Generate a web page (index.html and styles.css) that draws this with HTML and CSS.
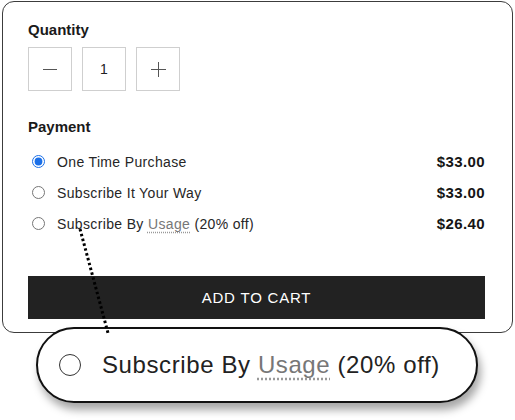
FILE: index.html
```html
<!DOCTYPE html>
<html>
<head>
<meta charset="utf-8">
<link rel="stylesheet" href="styles.css">
</head>
<body>
<div class="page">
  <div class="card">
    <div class="heading">Quantity</div>
    <div class="qty">
      <div class="qty-box">
        <svg width="14" height="14" viewBox="0 0 14 14"><line x1="0" y1="7.5" x2="14" y2="7.5" stroke="#555" stroke-width="1"/></svg>
      </div>
      <div class="qty-box qty-value">1</div>
      <div class="qty-box">
        <svg width="15" height="15" viewBox="0 0 15 15"><line x1="0" y1="7.5" x2="15" y2="7.5" stroke="#555" stroke-width="1"/><line x1="7.5" y1="0" x2="7.5" y2="15" stroke="#555" stroke-width="1"/></svg>
      </div>
    </div>
    <div class="heading payment">Payment</div>
    <div class="options">
      <label class="option">
        <input type="radio" name="pay" class="radio" checked>
        <span class="label">One Time Purchase</span>
        <span class="price">$33.00</span>
      </label>
      <label class="option">
        <input type="radio" name="pay" class="radio">
        <span class="label">Subscribe It Your Way</span>
        <span class="price">$33.00</span>
      </label>
      <label class="option">
        <input type="radio" name="pay" class="radio">
        <span class="label">Subscribe By <span class="usage">Usage</span> (20% off)</span>
        <span class="price">$26.40</span>
      </label>
    </div>
    <button class="cart">ADD TO CART</button>
  </div>

  <div class="zoom">
    <span class="zoom-radio"></span>
    <span class="zoom-text">Subscribe By <span class="usage">Usage</span> (20% off)</span>
  </div>

  <svg class="pointer" width="515" height="420" viewBox="0 0 515 420">
    <line x1="80" y1="229" x2="108" y2="333" stroke="#000" stroke-width="3" stroke-dasharray="2.5 2.5"/>
  </svg>
</div>
</body>
</html>
```
FILE: styles.css
```css
* { box-sizing: border-box; }

html, body {
  margin: 0;
  background: #fff;
}

body {
  font-family: "Liberation Sans", Arial, sans-serif;
  color: #222;
  width: 515px;
  height: 420px;
  overflow: hidden;
}

.page {
  position: relative;
  padding: 1px 0 0 2px;
  height: 420px;
}

.card {
  width: 511px;
  border: 1px solid #3c3c3c;
  border-radius: 12px;
  padding: 19px 27px 13px 25px;
  background: #fff;
}

.heading {
  font-weight: bold;
  font-size: 15px;
  line-height: 18px;
  color: #1a1a1a;
}

.qty {
  display: flex;
  gap: 10px;
  margin-top: 8px;
}

.qty-box {
  width: 44px;
  height: 44px;
  border: 1px solid #cfcfcf;
  display: flex;
  align-items: center;
  justify-content: center;
}

.qty-box svg { display: block; }

.qty-value {
  font-size: 14px;
  color: #222;
}

.payment {
  margin-top: 27px;
}

.options {
  margin-top: 10px;
  display: flex;
  flex-direction: column;
}

.option {
  display: flex;
  align-items: center;
  height: 31px;
  font-size: 14px;
}

.radio {
  width: 13px;
  height: 13px;
  margin: 0 12px 0 4px;
  accent-color: #1a6fe8;
}

.label {
  flex: 1;
  color: #262626;
  letter-spacing: 0.35px;
}

.usage {
  color: #777;
  text-decoration: underline dotted #999;
  text-underline-offset: 3px;
}

.price {
  font-weight: bold;
  font-size: 15px;
  letter-spacing: 0.4px;
  color: #151515;
}

.cart {
  display: block;
  width: 100%;
  height: 43px;
  margin-top: 37px;
  border: none;
  background: #222;
  color: #fff;
  font-family: "Liberation Sans", Arial, sans-serif;
  font-size: 15px;
  letter-spacing: 0.8px;
}

.zoom {
  position: absolute;
  left: 36px;
  top: 327px;
  width: 442px;
  height: 76px;
  border: 2px solid #111;
  border-radius: 38px;
  background: #fff;
  box-shadow: 3px 7px 9px rgba(0, 0, 0, 0.35);
  display: flex;
  align-items: center;
  padding-left: 21px;
  gap: 21px;
}

.zoom-radio {
  width: 22px;
  height: 22px;
  border: 1.5px solid #333;
  border-radius: 50%;
  flex: none;
}

.zoom-text {
  font-size: 24px;
  color: #222;
  letter-spacing: 0.6px;
}

.zoom-text .usage {
  text-underline-offset: 5px;
}

.pointer {
  position: absolute;
  left: 0;
  top: 0;
  pointer-events: none;
}
```
